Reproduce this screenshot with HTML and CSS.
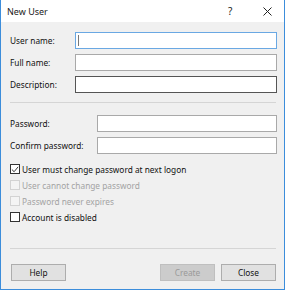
FILE: index.html
```html
<!DOCTYPE html>
<html lang="en">
<head>
    <meta charset="UTF-8">
    <title>New User</title>
    <link rel="stylesheet" href="styles.css">
</head>
<body>
    <div class="window">
        <div class="titlebar">
            <span class="title">New User</span>
            <span class="help-btn">?</span>
            <span class="close-btn">
                <svg width="9" height="9" viewBox="0 0 9 9"><path d="M0.5 0.5 L8.5 8.5 M8.5 0.5 L0.5 8.5" stroke="#222" stroke-width="1" fill="none"/></svg>
            </span>
        </div>
        <div class="body">
            <div class="fields names">
                <label>User name:</label>
                <div class="input focused"><span class="caret"></span></div>
                <label>Full name:</label>
                <div class="input"></div>
                <label>Description:</label>
                <div class="input hover"></div>
            </div>

            <div class="separator sep-top"></div>

            <div class="fields passwords">
                <label>Password:</label>
                <div class="input"></div>
                <label>Confirm password:</label>
                <div class="input"></div>
            </div>

            <div class="checks">
                <div class="check"><span class="box checked">
                    <svg width="9" height="9" viewBox="0 0 9 9"><path d="M1 4.5 L3.5 7 L8 1.5" stroke="#222" stroke-width="1" fill="none"/></svg>
                </span>User must change password at next logon</div>
                <div class="check disabled"><span class="box"></span>User cannot change password</div>
                <div class="check disabled"><span class="box"></span>Password never expires</div>
                <div class="check"><span class="box"></span>Account is disabled</div>
            </div>

            <div class="separator sep-bottom"></div>

            <div class="buttons">
                <button class="btn">Help</button>
                <div class="spacer"></div>
                <button class="btn" disabled>Create</button>
                <button class="btn">Close</button>
            </div>
        </div>
    </div>
</body>
</html>
```

FILE: styles.css
```css
body {
    margin: 0;
    font-family: "Noto Sans", "Open Sans", sans-serif;
    font-size: 8.3px;
    color: #000;
}

.window {
    width: 285px;
    height: 290px;
    box-sizing: border-box;
    border: 1px solid #3c8ddb;
    border-top: none;
    background-color: #f0f0f0;
}

.titlebar {
    height: 22px;
    background-color: #fff;
    display: flex;
    align-items: center;
    padding-left: 6px;
}

.title {
    font-size: 9px;
    color: #222;
    flex: 1;
}

.help-btn {
    font-size: 10px;
    width: 10px;
    margin-right: 25px;
    color: #222;
}

.close-btn {
    display: flex;
    width: 9px;
    margin-right: 12px;
}

.body {
    padding: 10px 7px 0 8px;
}

.fields {
    display: grid;
    row-gap: 5px;
    align-items: center;
}

.names {
    grid-template-columns: 66px 1fr;
}

.passwords {
    grid-template-columns: 88px 1fr;
}

label {
    padding-left: 1px;
    color: #111;
}

.input {
    height: 17px;
    box-sizing: border-box;
    background-color: #fff;
    border: 1px solid #a9a9a9;
    position: relative;
}

.input.focused {
    border-color: #6aa8e3;
}

.input.hover {
    border-color: #555;
}

.caret {
    position: absolute;
    left: 2px;
    top: 2px;
    width: 1px;
    height: 11px;
    background-color: #777;
}

.separator {
    height: 1px;
    background-color: #d5d5d5;
    margin-left: 1px;
    margin-right: 1px;
}

.sep-top {
    margin-top: 9px;
    margin-bottom: 12px;
}

.checks {
    margin-top: 7px;
    padding-left: 1px;
}

.check {
    height: 16px;
    display: flex;
    align-items: center;
    color: #111;
}

.check.disabled {
    color: #a3a3a3;
}

.box {
    width: 10px;
    height: 10px;
    box-sizing: border-box;
    border: 1px solid #333;
    background-color: #fff;
    margin-right: 2px;
    display: flex;
    align-items: center;
    justify-content: center;
}

.check.disabled .box {
    border-color: #d3d3d3;
    background-color: #f4f4f4;
}

.sep-bottom {
    margin-top: 23px;
}

.buttons {
    display: flex;
    gap: 6px;
    margin-top: 15px;
    padding: 0 1px 0 2px;
}

.spacer {
    flex: 1;
}

.btn {
    width: 55px;
    height: 17px;
    box-sizing: border-box;
    border: 1px solid #adadad;
    background-color: #e1e1e1;
    font-family: inherit;
    font-size: 8.3px;
    color: #111;
    padding: 0;
}

.btn:disabled {
    background-color: #cccccc;
    border-color: #bfbfbf;
    color: #9a9a9a;
}
```
